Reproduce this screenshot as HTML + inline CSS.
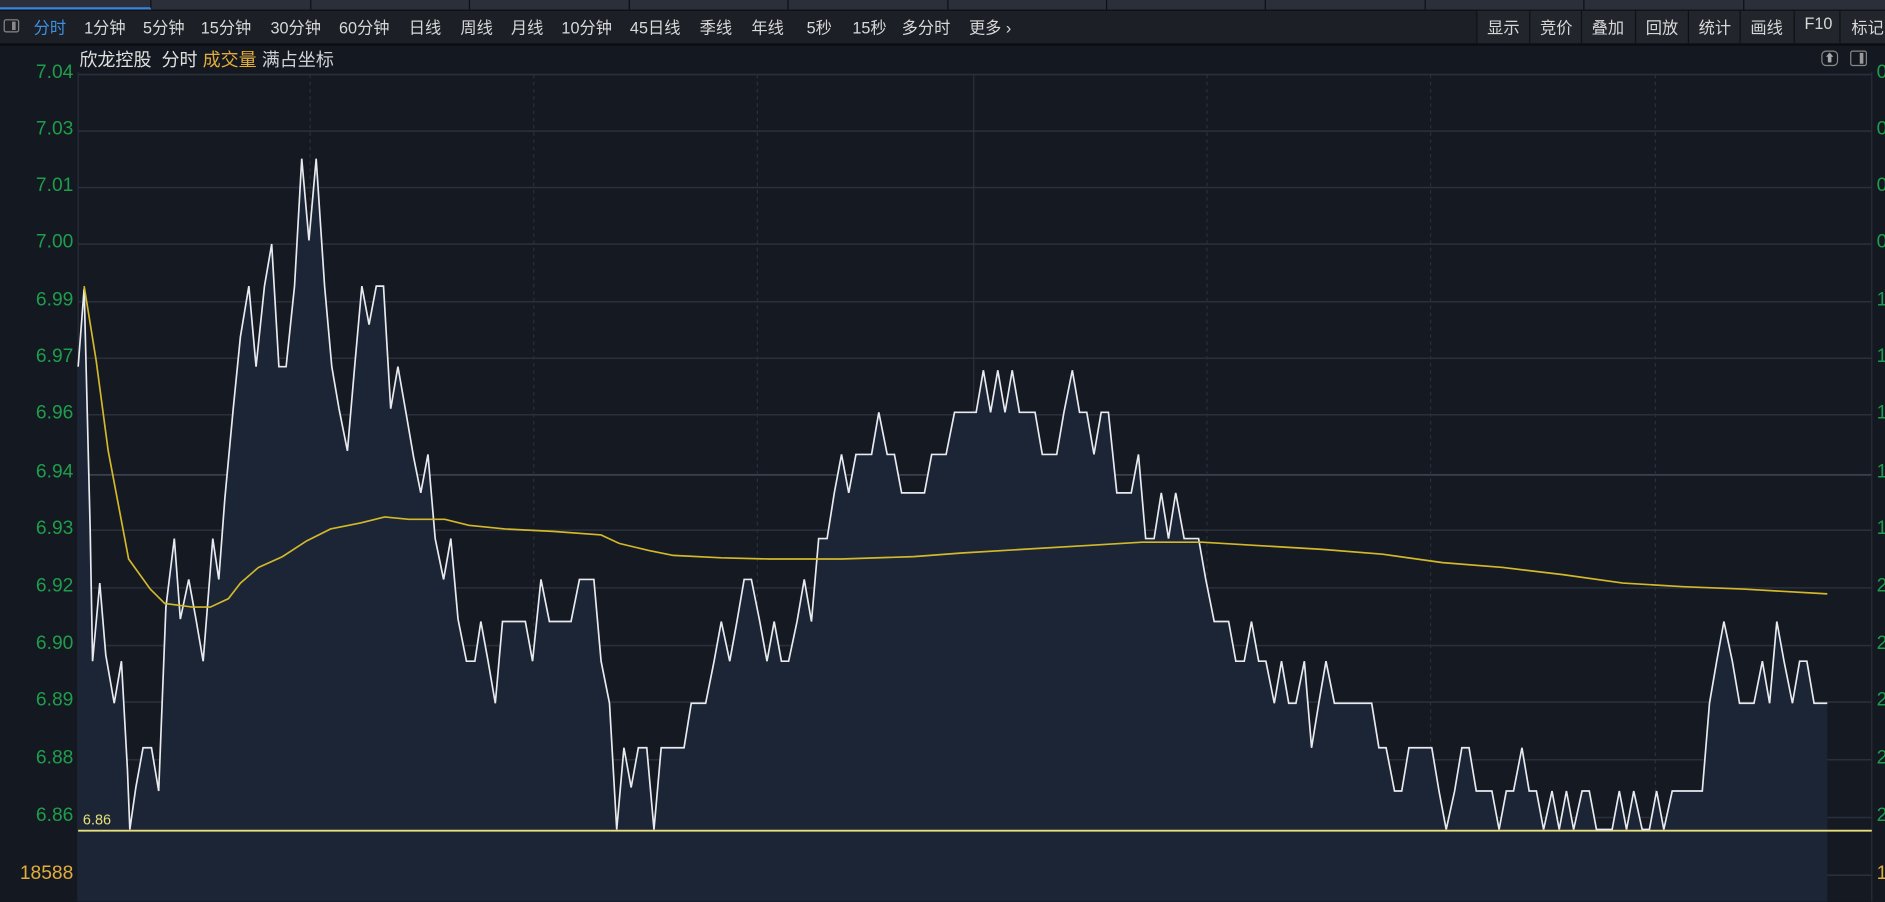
<!DOCTYPE html>
<html><head><meta charset="utf-8"><style>
html,body{margin:0;padding:0;background:#141820;overflow:hidden;width:1885px;height:901px}
#s{position:absolute;left:0;top:0;width:1568px;height:750px;transform:scale(1.20217);transform-origin:0 0;font-family:"Liberation Sans","Noto Sans CJK SC",sans-serif;background:#141820}
.tabs{position:absolute;left:0;top:0;width:1568px;height:8px;background:#2a2f3a}
.tab{position:absolute;top:0;height:8px;border-right:1px solid #0d0f14}
.bar{position:absolute;left:0;top:8px;width:1568px;height:27px;background:#1c1f26;border-top:1px solid #0c0e12;border-bottom:2px solid #0b0d11;font-size:13.5px;color:#d8d8d8}
.bar span{position:absolute;top:3px;white-space:nowrap}
.rb{position:absolute;top:0;height:27px;border-left:1px solid #0f1115;background:#22252c;overflow:hidden}
.rb span{position:absolute;top:3px;left:8px}
.lab{position:absolute;left:0;width:61px;text-align:right;font-size:16px;color:#1e9e4c}
.rl{position:absolute;left:1561px;font-size:16px;color:#1e9e4c}
</style></head><body><div id="s">
<div class="tabs">
<div class="tab" style="left:0;width:125px;border-bottom:2px solid #3b82d8;height:6px"></div>
<div class="tab" style="left:126px;width:132px"></div><div class="tab" style="left:259px;width:131px"></div><div class="tab" style="left:391px;width:132px"></div><div class="tab" style="left:524px;width:131px"></div><div class="tab" style="left:656px;width:132px"></div><div class="tab" style="left:789px;width:131px"></div><div class="tab" style="left:921px;width:131px"></div><div class="tab" style="left:1053px;width:132px"></div><div class="tab" style="left:1186px;width:131px"></div><div class="tab" style="left:1318px;width:132px"></div>
</div>
<div class="bar">
<div style="position:absolute;left:3px;top:7px;width:11px;height:9px;border:1px solid #888;border-radius:2px"><div style="position:absolute;left:6px;top:1px;width:3px;height:7px;background:#888"></div></div>
<span style="left:28px;color:#3d8fe0">分时</span>
<span style="left:70px">1分钟</span><span style="left:119px">5分钟</span><span style="left:167px">15分钟</span><span style="left:225px">30分钟</span><span style="left:282px">60分钟</span><span style="left:340px">日线</span><span style="left:383px">周线</span><span style="left:425px">月线</span><span style="left:467px">10分钟</span><span style="left:524px">45日线</span><span style="left:582px">季线</span><span style="left:625px">年线</span><span style="left:671px">5秒</span><span style="left:709px">15秒</span><span style="left:750px">多分时</span><span style="left:806px">更多 ›</span>
<div class="rb" style="left:1228px;width:44px"><span>显示</span></div>
<div class="rb" style="left:1272px;width:43px"><span>竞价</span></div>
<div class="rb" style="left:1315px;width:45px"><span>叠加</span></div>
<div class="rb" style="left:1360px;width:44px"><span>回放</span></div>
<div class="rb" style="left:1404px;width:43px"><span>统计</span></div>
<div class="rb" style="left:1447px;width:45px"><span>画线</span></div>
<div class="rb" style="left:1492px;width:38px"><span>F10</span></div>
<div class="rb" style="left:1530px;width:38px"><span style="left:9px">标记</span></div>
</div>
<div style="position:absolute;left:66px;top:39px;font-size:15px;color:#e0e0e0;white-space:nowrap">欣龙控股&nbsp; 分时 <span style="color:#e3ad3c">成交量</span> <span style="color:#cfd3d8">满占坐标</span></div>
<div style="position:absolute;left:1515px;top:42px;width:12px;height:11px;border:1px solid #888;border-radius:4px;color:#aaa;font-size:9px;line-height:11px;text-align:center">⬆</div>
<div style="position:absolute;left:1539px;top:42px;width:12px;height:11px;border:1px solid #888;border-radius:2px"><div style="position:absolute;left:7px;top:1px;width:3px;height:9px;background:#999"></div></div>
<svg style="position:absolute;left:0;top:0" width="1568" height="750" viewBox="0 0 1568 750">
<rect x="65" y="62" width="1492" height="688" fill="#151922"/>
<g stroke="#2a2f3a" stroke-width="1.3">
<line x1="65" y1="62" x2="1557" y2="62"/><line x1="65" y1="109" x2="1557" y2="109"/><line x1="65" y1="156" x2="1557" y2="156"/><line x1="65" y1="203" x2="1557" y2="203"/><line x1="65" y1="251" x2="1557" y2="251"/><line x1="65" y1="298" x2="1557" y2="298"/><line x1="65" y1="345" x2="1557" y2="345"/><line x1="65" y1="441" x2="1557" y2="441"/><line x1="65" y1="489" x2="1557" y2="489"/><line x1="65" y1="537" x2="1557" y2="537"/><line x1="65" y1="584" x2="1557" y2="584"/><line x1="65" y1="632" x2="1557" y2="632"/><line x1="65" y1="680" x2="1557" y2="680"/><line x1="65" y1="728" x2="1557" y2="728"/>
</g>
<line x1="65" y1="395" x2="1557" y2="395" stroke="#3a404c" stroke-width="1.5"/>
<line x1="65" y1="60" x2="65" y2="750" stroke="#2a2f3a"/><line x1="1557" y1="60" x2="1557" y2="750" stroke="#2a2f3a"/>
<line x1="810" y1="62" x2="810" y2="750" stroke="#2c313c"/>
<g stroke="#2a2f3a" stroke-dasharray="3,3"><line x1="258" y1="62" x2="258" y2="750"/><line x1="444" y1="62" x2="444" y2="750"/><line x1="630" y1="62" x2="630" y2="750"/><line x1="1004" y1="62" x2="1004" y2="750"/><line x1="1190" y1="62" x2="1190" y2="750"/><line x1="1377" y1="62" x2="1377" y2="750"/></g>
<polygon fill="#1b2536" points="65,750 65,305 70,240 75,440 77,550 83,485 88,545 95,585 101,550 106,640 108,690 113,655 119,622 126,622 132,658 138,505 145,448 150,515 157,482 163,515 169,550 177,448 182,482 187,415 194,340 200,280 207,238 213,305 220,238 226,203 232,305 238,305 245,238 251,132 257,200 263,132 270,238 276,305 282,340 289,375 295,305 301,238 307,270 313,238 319,238 325,340 331,305 338,345 344,380 350,410 356,378 362,448 369,482 375,448 381,515 388,550 395,550 400,517 406,550 412,585 418,517 437,517 443,550 450,482 457,517 475,517 482,482 494,482 500,550 507,585 513,690 519,622 525,655 531,622 538,622 544,690 550,622 569,622 575,585 587,585 594,550 600,517 607,550 613,517 619,482 625,482 632,517 638,550 644,517 650,550 656,550 663,517 669,482 675,517 681,448 688,448 694,410 700,378 706,410 712,378 725,378 731,343 738,378 744,378 750,410 769,410 775,378 787,378 794,343 812,343 818,308 824,343 830,308 836,343 842,308 848,343 861,343 867,378 879,378 885,343 892,308 898,343 904,343 910,378 916,343 922,343 929,410 941,410 947,378 953,448 960,448 966,410 972,448 978,410 985,448 997,448 1003,482 1010,517 1022,517 1028,550 1035,550 1041,517 1047,550 1053,550 1060,585 1066,550 1072,585 1078,585 1085,550 1091,622 1097,585 1103,550 1110,585 1141,585 1147,622 1153,622 1160,658 1166,658 1172,622 1191,622 1197,658 1203,690 1210,658 1216,622 1222,622 1228,658 1241,658 1247,690 1253,658 1259,658 1266,622 1272,658 1278,658 1284,690 1291,658 1297,690 1303,658 1309,690 1316,658 1322,658 1328,690 1341,690 1347,658 1353,690 1359,658 1366,690 1372,690 1378,658 1384,690 1391,658 1416,658 1422,585 1428,550 1434,517 1441,550 1447,585 1459,585 1466,550 1472,585 1478,517 1484,550 1491,585 1497,550 1503,550 1509,585 1520,585 1520,750"/>
<line x1="65" y1="691" x2="1557" y2="691" stroke="#e6e07a" stroke-width="1.6"/>
<polyline fill="none" stroke="#e8eaee" stroke-width="1.4" points="65,305 70,240 75,440 77,550 83,485 88,545 95,585 101,550 106,640 108,690 113,655 119,622 126,622 132,658 138,505 145,448 150,515 157,482 163,515 169,550 177,448 182,482 187,415 194,340 200,280 207,238 213,305 220,238 226,203 232,305 238,305 245,238 251,132 257,200 263,132 270,238 276,305 282,340 289,375 295,305 301,238 307,270 313,238 319,238 325,340 331,305 338,345 344,380 350,410 356,378 362,448 369,482 375,448 381,515 388,550 395,550 400,517 406,550 412,585 418,517 437,517 443,550 450,482 457,517 475,517 482,482 494,482 500,550 507,585 513,690 519,622 525,655 531,622 538,622 544,690 550,622 569,622 575,585 587,585 594,550 600,517 607,550 613,517 619,482 625,482 632,517 638,550 644,517 650,550 656,550 663,517 669,482 675,517 681,448 688,448 694,410 700,378 706,410 712,378 725,378 731,343 738,378 744,378 750,410 769,410 775,378 787,378 794,343 812,343 818,308 824,343 830,308 836,343 842,308 848,343 861,343 867,378 879,378 885,343 892,308 898,343 904,343 910,378 916,343 922,343 929,410 941,410 947,378 953,448 960,448 966,410 972,448 978,410 985,448 997,448 1003,482 1010,517 1022,517 1028,550 1035,550 1041,517 1047,550 1053,550 1060,585 1066,550 1072,585 1078,585 1085,550 1091,622 1097,585 1103,550 1110,585 1141,585 1147,622 1153,622 1160,658 1166,658 1172,622 1191,622 1197,658 1203,690 1210,658 1216,622 1222,622 1228,658 1241,658 1247,690 1253,658 1259,658 1266,622 1272,658 1278,658 1284,690 1291,658 1297,690 1303,658 1309,690 1316,658 1322,658 1328,690 1341,690 1347,658 1353,690 1359,658 1366,690 1372,690 1378,658 1384,690 1391,658 1416,658 1422,585 1428,550 1434,517 1441,550 1447,585 1459,585 1466,550 1472,585 1478,517 1484,550 1491,585 1497,550 1503,550 1509,585 1520,585"/>
<polyline fill="none" stroke="#d2b82a" stroke-width="1.4" points="70,238 80,300 90,375 107,465 125,490 137,502 160,505 175,505 190,498 200,485 215,472 235,463 255,450 275,440 300,435 320,430 340,432 370,432 390,437 420,440 460,442 500,445 515,452 540,458 560,462 600,464 640,465 700,465 760,463 800,460 850,457 900,454 950,451 1000,451 1050,454 1100,457 1150,461 1200,468 1250,472 1300,478 1350,485 1400,488 1450,490 1520,494"/>
<text x="69" y="686" font-family="Liberation Sans" font-size="12" fill="#e6e07a">6.86</text>
</svg>
<div class="lab" style="top:52px">7.04</div><div class="lab" style="top:99px">7.03</div><div class="lab" style="top:146px">7.01</div><div class="lab" style="top:193px">7.00</div><div class="lab" style="top:241px">6.99</div><div class="lab" style="top:288px">6.97</div><div class="lab" style="top:335px">6.96</div><div class="lab" style="top:384px">6.94</div><div class="lab" style="top:431px">6.93</div><div class="lab" style="top:479px">6.92</div><div class="lab" style="top:527px">6.90</div><div class="lab" style="top:574px">6.89</div><div class="lab" style="top:622px">6.88</div><div class="lab" style="top:670px">6.86</div><div class="lab" style="top:718px;color:#e3ad3c">18588</div>
<div class="rl" style="top:52px">0</div><div class="rl" style="top:99px">0</div><div class="rl" style="top:146px">0</div><div class="rl" style="top:193px">0</div><div class="rl" style="top:241px">1</div><div class="rl" style="top:288px">1</div><div class="rl" style="top:335px">1</div><div class="rl" style="top:384px">1</div><div class="rl" style="top:431px">1</div><div class="rl" style="top:479px">2</div><div class="rl" style="top:527px">2</div><div class="rl" style="top:574px">2</div><div class="rl" style="top:622px">2</div><div class="rl" style="top:670px">2</div><div class="rl" style="top:718px;color:#e3ad3c">1</div>
</div></body></html>
